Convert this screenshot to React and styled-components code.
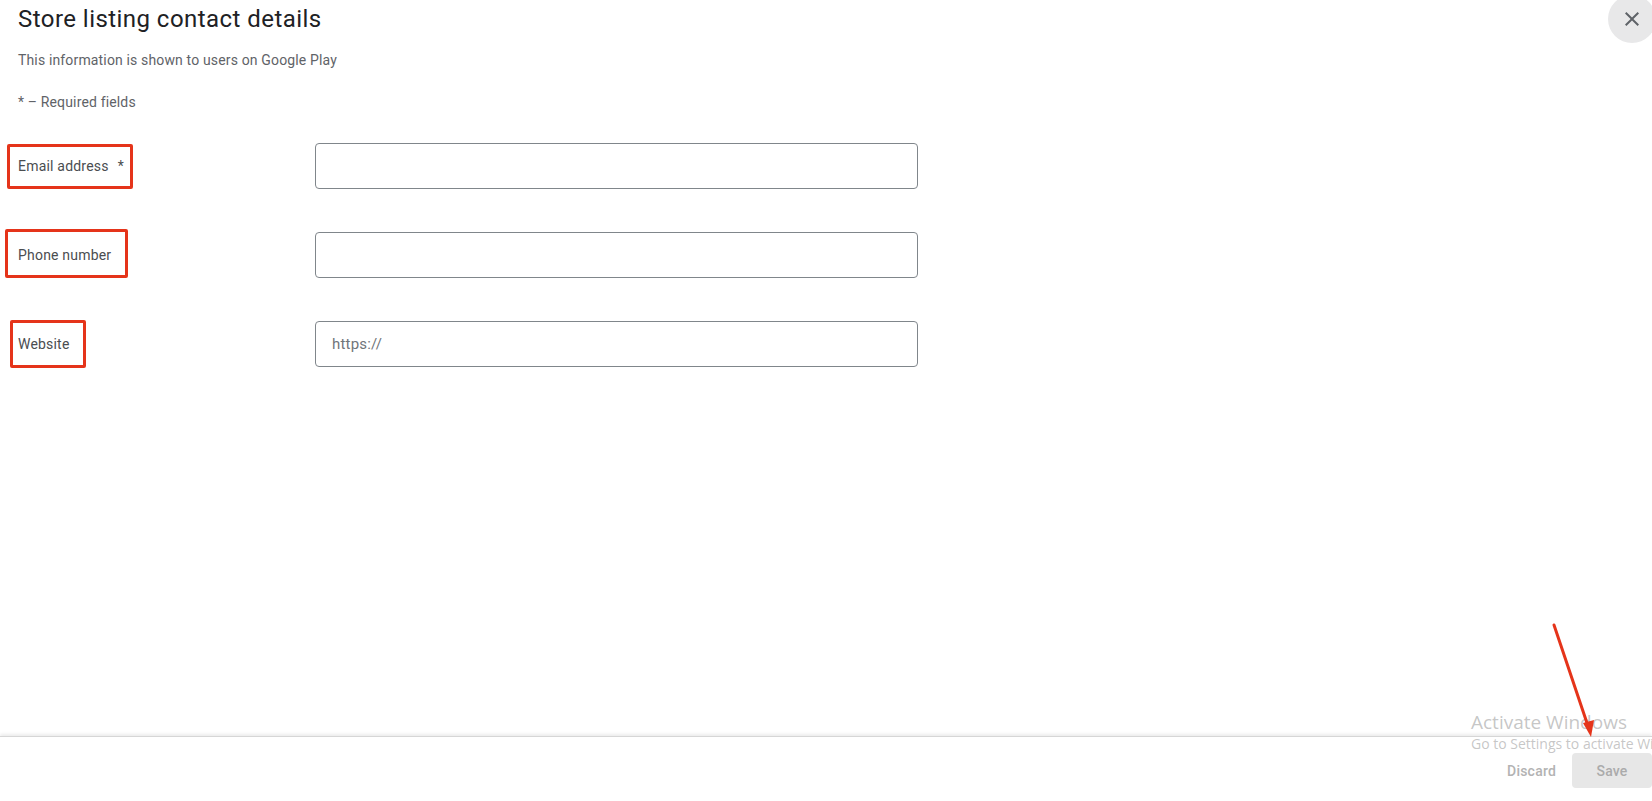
import React from "react";
import styled, { createGlobalStyle } from "styled-components";

const Global = createGlobalStyle`
  html, body { margin: 0; padding: 0; background: #fff; overflow: hidden; }
  body { font-family: Roboto, "Liberation Sans", Arial, sans-serif; }
  * { box-sizing: border-box; }
`;

const Page = styled.div`
  position: relative;
  height: 100vh;
  display: flex;
  flex-direction: column;
  overflow: hidden;
`;

const Main = styled.main`
  flex: 1;
  padding-left: 18px;
`;

const Header = styled.header`
  height: 35px;
  display: flex;
  justify-content: space-between;
  align-items: flex-start;
`;

const Title = styled.h1`
  margin: 3px 0 0;
  font-size: 24px;
  line-height: 32px;
  font-weight: 400;
  color: #202124;
  letter-spacing: 0.45px;
`;

const CloseButton = styled.button`
  width: 48px;
  height: 48px;
  margin-top: -5px;
  margin-right: -4px;
  border: none;
  border-radius: 50%;
  background: #e8e8e9;
  display: flex;
  align-items: center;
  justify-content: center;
  padding: 0;
  cursor: pointer;
  flex-shrink: 0;
`;

const Text = styled.p`
  margin: ${(p) => p.$top}px 0 0;
  font-size: 14px;
  line-height: 20px;
  letter-spacing: 0.15px;
  color: #5f6368;
`;

const Form = styled.div`
  margin-top: 31px;
  display: grid;
  grid-template-columns: 297px 603px;
  grid-auto-rows: 46px;
  row-gap: 43px;
`;

const LabelCell = styled.div`
  position: relative;
  display: flex;
  align-items: center;
  font-size: 14px;
  line-height: 20px;
  letter-spacing: 0.2px;
  color: #4a4d50;
`;

const Required = styled.span`
  margin-left: 9px;
`;

const Annotation = styled.div`
  position: absolute;
  border: 3px solid #e5341a;
  border-radius: 2px;
  pointer-events: none;
`;

const Input = styled.input`
  width: 100%;
  height: 46px;
  border: 1px solid #80868b;
  border-radius: 4px;
  padding: 0 16px;
  font-family: Roboto, "Liberation Sans", Arial, sans-serif;
  font-size: 15px;
  letter-spacing: 0.2px;
  color: #202124;
  outline: none;
  background: #fff;
  &::placeholder { color: #70757a; }
`;

const Footer = styled.footer`
  border-top: 1px solid #d6d6d6;
  box-shadow: 0 -2px 3px rgba(0, 0, 0, 0.08);
  padding: 16px 0 13px;
  display: flex;
  justify-content: flex-end;
  align-items: center;
`;

const FooterButton = styled.button`
  height: 35px;
  border: none;
  border-radius: 4px;
  font-family: Roboto, "Liberation Sans", Arial, sans-serif;
  font-size: 14px;
  font-weight: 500;
  letter-spacing: 0.2px;
  padding: 0 16px;
  background: ${(p) => (p.$filled ? "#e7e7e7" : "transparent")};
  color: ${(p) => (p.$filled ? "#ababab" : "#b3b3b3")};
  width: ${(p) => (p.$filled ? "80px" : "auto")};
`;

const Watermark = styled.div`
  position: absolute;
  left: 1471px;
  top: 710px;
  white-space: nowrap;
  font-family: "Open Sans", "Noto Sans", sans-serif;
  color: rgba(150, 150, 150, 0.55);
  pointer-events: none;
`;

const WatermarkTitle = styled.div`
  font-size: 19px;
  line-height: 24px;
`;

const WatermarkSub = styled.div`
  font-size: 14px;
  line-height: 20px;
`;

const ArrowLayer = styled.svg`
  position: absolute;
  left: 1540px;
  top: 615px;
  pointer-events: none;
  overflow: visible;
`;

const rows = [
  { label: "Email address", required: true, box: { top: 1, left: -11, width: 126, height: 45 } },
  { label: "Phone number", box: { top: -3, left: -13, width: 123, height: 49 } },
  { label: "Website", placeholder: "https://", box: { top: -1, left: -8, width: 76, height: 48 } },
];

export default function App() {
  return (
    <Page>
      <Global />
      <Main>
        <Header>
          <Title>Store listing contact details</Title>
          <CloseButton aria-label="Close">
            <svg width="24" height="24" viewBox="0 0 24 24">
              <path
                fill="#5f6368"
                d="M19 6.41L17.59 5 12 10.59 6.41 5 5 6.41 10.59 12 5 17.59 6.41 19 12 13.41 17.59 19 19 17.59 13.41 12z"
              />
            </svg>
          </CloseButton>
        </Header>
        <Text $top={15}>This information is shown to users on Google Play</Text>
        <Text $top={22}>* – Required fields</Text>
        <Form>
          {rows.map((r) => (
            <React.Fragment key={r.label}>
              <LabelCell>
                {r.label}
                {r.required && <Required>*</Required>}
                <Annotation
                  style={{ top: r.box.top, left: r.box.left, width: r.box.width, height: r.box.height }}
                />
              </LabelCell>
              <Input placeholder={r.placeholder || ""} />
            </React.Fragment>
          ))}
        </Form>
      </Main>
      <Footer>
        <FooterButton>Discard</FooterButton>
        <FooterButton $filled>Save</FooterButton>
      </Footer>
      <Watermark>
        <WatermarkTitle>Activate Windows</WatermarkTitle>
        <WatermarkSub>Go to Settings to activate Windows.</WatermarkSub>
      </Watermark>
      <ArrowLayer width="60" height="130" viewBox="0 0 60 130">
        <line x1="14" y1="10" x2="49" y2="114" stroke="#e5341a" strokeWidth="3" strokeLinecap="round" />
        <polygon points="51,122 43,108 54,105" fill="#e5341a" />
      </ArrowLayer>
    </Page>
  );
}
